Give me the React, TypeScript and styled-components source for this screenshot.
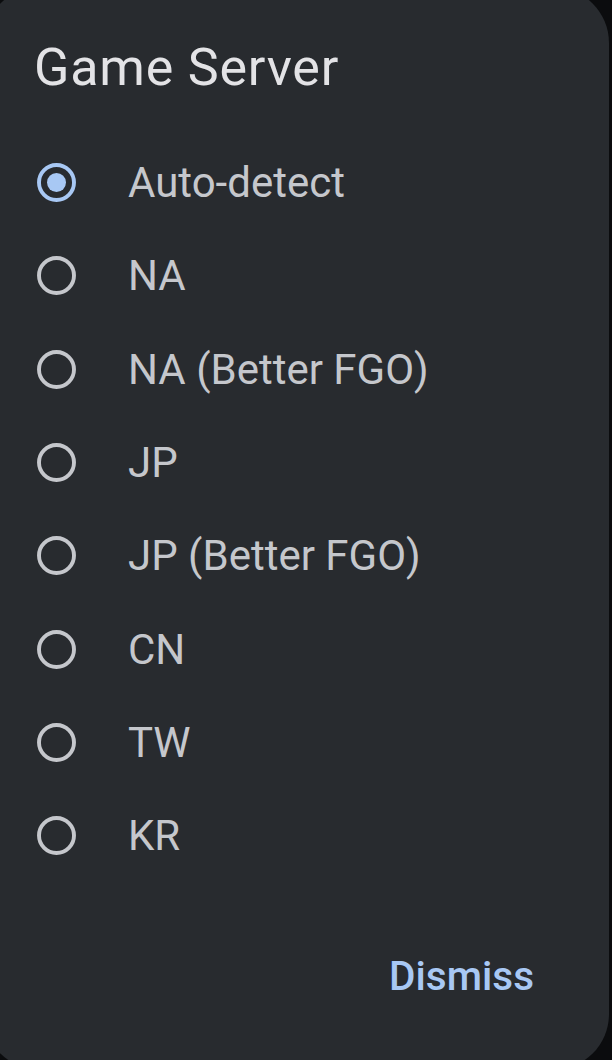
import React, { useState } from 'react';
import styled, { createGlobalStyle } from 'styled-components';

const GlobalStyle = createGlobalStyle`
  html, body {
    margin: 0;
    padding: 0;
    background: #0b0c0e;
    overflow: hidden;
  }
  body {
    font-family: Roboto, "Noto Sans", "Liberation Sans", sans-serif;
    -webkit-font-smoothing: antialiased;
  }
`;

const colors = {
  surface: '#282b2f',
  title: '#e3e3e6',
  text: '#c5c7cc',
  ring: '#c5c7cc',
  primary: '#a8c8f4',
};

// Dialog sheet, slightly larger than the viewport so its corners are clipped
const Dialog = styled.div`
  box-sizing: border-box;
  width: 625px;
  height: 1083px;
  margin: -13px 0 0 -16px;
  padding: 53px 0 0 0;
  border-radius: 56px;
  background: ${colors.surface};
  display: flex;
  flex-direction: column;
`;

const Title = styled.h2`
  margin: 0;
  padding-left: 50px;
  font-size: 52px;
  font-weight: 400;
  letter-spacing: 0.8px;
  line-height: 56px;
  color: ${colors.title};
`;

const OptionList = styled.div`
  margin-top: 40px;
  display: flex;
  flex-direction: column;
`;

const Option = styled.label`
  height: 93.3px;
  display: flex;
  align-items: center;
  gap: 52px;
  padding-left: 53px;
  cursor: pointer;
`;

const OptionText = styled.span`
  font-size: 42px;
  line-height: 93px;
  color: ${colors.text};
`;

const RadioBox = styled.span`
  width: 39px;
  height: 39px;
  display: flex;
  flex-shrink: 0;
`;

const Actions = styled.div`
  margin-top: auto;
  display: flex;
  justify-content: flex-end;
  padding: 0 75px 66px 0;
`;

const TextButton = styled.button`
  border: none;
  background: none;
  padding: 0;
  font-family: inherit;
  font-size: 40.5px;
  font-weight: 500;
  line-height: 56px;
  color: ${colors.primary};
  cursor: pointer;
`;

const Radio: React.FC<{ checked: boolean }> = ({ checked }) => (
  <RadioBox>
    <svg width="39" height="39" viewBox="0 0 39 39">
      <circle
        cx="19.5"
        cy="19.5"
        r="17.5"
        fill="none"
        stroke={checked ? colors.primary : colors.ring}
        strokeWidth="3.9"
      />
      {checked && <circle cx="19.5" cy="19.5" r="9.5" fill={colors.primary} />}
    </svg>
  </RadioBox>
);

const servers = [
  'Auto-detect',
  'NA',
  'NA (Better FGO)',
  'JP',
  'JP (Better FGO)',
  'CN',
  'TW',
  'KR',
];

export default function App() {
  const [selected, setSelected] = useState(0);

  return (
    <>
      <GlobalStyle />
      <Dialog>
        <Title>Game Server</Title>
        <OptionList>
          {servers.map((name, i) => (
            <Option key={name} onClick={() => setSelected(i)}>
              <Radio checked={selected === i} />
              <OptionText>{name}</OptionText>
            </Option>
          ))}
        </OptionList>
        <Actions>
          <TextButton>Dismiss</TextButton>
        </Actions>
      </Dialog>
    </>
  );
}
